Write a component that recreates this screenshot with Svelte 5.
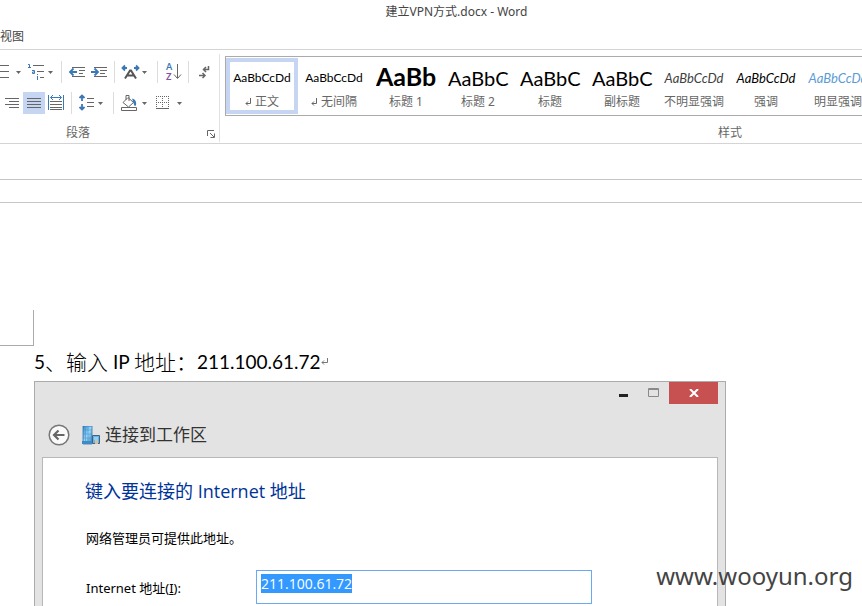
<script>
  import { onMount } from 'svelte';

  const styles = [
    { sample: 'AaBbCcDd', name: '正文', mark: true, kind: 'body', selected: true },
    { sample: 'AaBbCcDd', name: '无间隔', mark: true, kind: 'body' },
    { sample: 'AaBb', name: '标题 1', kind: 'h1' },
    { sample: 'AaBbC', name: '标题 2', kind: 'h2' },
    { sample: 'AaBbC', name: '标题', kind: 'h2' },
    { sample: 'AaBbC', name: '副标题', kind: 'h2' },
    { sample: 'AaBbCcDd', name: '不明显强调', kind: 'subtle' },
    { sample: 'AaBbCcDd', name: '强调', kind: 'em' },
    { sample: 'AaBbCcDd', name: '明显强调', kind: 'intense' }
  ];

  let address = $state('211.100.61.72');
  let field;

  onMount(() => {
    field.focus({ preventScroll: true });
    field.select();
  });
</script>

{#snippet caret(x)}
  <path class="fill" d="M{x} 10h5l-2.5 3z" />
{/snippet}

<div class="app">
  <header class="titlebar">建立VPN方式.docx - Word</header>
  <nav class="tabs"><a href="#view">视图</a></nav>

  <section class="ribbon">
    <div class="group paragraph">
      <div class="tools">
        <div class="row">
          <button aria-label="编号"><svg width="26" height="22" viewBox="0 0 26 22">
            <path class="ink" d="M0 4.5h9M0 10.5h9M0 16.5h9" />{@render caret(16)}
          </svg></button>
          <button aria-label="多级列表"><svg width="30" height="22" viewBox="0 0 30 22">
            <path class="ink" d="M7 4.5h11M11 10.5h7M14 16.5h4" />
            <path class="blue" d="M2 3.5h1.5v3M2 6.5h3M6 9.5h2.500v3h-2v-1.500h2M11.500 13v1M11.500 15v4" />
            {@render caret(22)}
          </svg></button>
          <span class="sep"></span>
          <button aria-label="减少缩进"><svg width="22" height="22" viewBox="0 0 22 22">
            <path class="ink" d="M7 6.5h13M14 9.500h6M14 12.500h4M7 15.500h13" />
            <path class="blue thick" d="M5 11h7M8.500 7.500L5 11l3.500 3.500" />
          </svg></button>
          <button aria-label="增加缩进"><svg width="22" height="22" viewBox="0 0 22 22">
            <path class="ink" d="M7 6.5h13M13 9.500h7M13 12.500h5M7 15.500h13" />
            <path class="blue thick" d="M4 11h7M7.500 7.500L11 11l-3.500 3.500" />
          </svg></button>
          <span class="sep"></span>
          <button aria-label="中文版式"><svg width="34" height="22" viewBox="0 0 34 22">
            <path class="dark" d="M7 17.500l5-8h1l5 8M9.500 14.500h6" />
            <path class="blue thick" d="M5 7h4M7 4.500L4.500 7l2.500 2.500M16 7h4M18 4.500l2.500 2.500-2.500 2.500" />
            {@render caret(24)}
          </svg></button>
          <span class="sep"></span>
          <button aria-label="排序"><svg width="22" height="22" viewBox="0 0 22 22">
            <text x="5" y="9" fill="#3c78b4">A</text>
            <text x="5" y="19" fill="#8352a5">Z</text>
            <path class="ink" d="M16.500 3v14M13 13.500l3.500 4 3.500-4" />
          </svg></button>
          <span class="sep"></span>
          <button aria-label="显示编辑标记"><svg width="26" height="22" viewBox="0 0 26 22">
            <path class="ink heavy" d="M16.500 5v3.500h-5M14 6L11.500 8.500 14 11M7 14.500h6M10.500 12l2.500 2.500-2.500 2.500" />
          </svg></button>
        </div>

        <div class="row">
          <button aria-label="右对齐"><svg width="23" height="22" viewBox="0 0 23 22">
            <path class="ink" d="M5 6.500h14M9 9.500h10M5 12.500h14M9 15.500h10" />
          </svg></button>
          <button class="on" aria-label="两端对齐" aria-pressed="true"><svg width="22" height="22" viewBox="0 0 22 22">
            <path class="ink" d="M4 6.500h14M4 9.500h14M4 12.500h14M4 15.500h14" />
          </svg></button>
          <button aria-label="分散对齐"><svg width="21" height="22" viewBox="0 0 21 22">
            <path class="blue" d="M3.500 3v15M18.500 3v15M5.500 5.500h11M8 3L5.500 5.500 8 8M14 3l2.500 2.500L14 8" />
            <path class="ink" d="M5 9.500h12M5 12.500h12M5 15.500h12M5 17.500h12" />
          </svg></button>
          <span class="sep"></span>
          <button aria-label="行距"><svg width="33" height="22" viewBox="0 0 33 22">
            <path class="blue thick" d="M7 4v5M7 12v5M4.500 6L7 3.500 9.500 6M4.500 15L7 17.500 9.500 15" />
            <path class="ink" d="M12 6.500h7M12 10.500h7M12 14.500h7" />{@render caret(23)}
          </svg></button>
          <span class="sep"></span>
          <button aria-label="底纹"><svg width="35" height="22" viewBox="0 0 35 22">
            <path class="ink" d="M6 10.500l5-5 5.500 5-5 4.500zM9 8V3.500h3V9M4.500 15.500h15v3h-15z" />
            <path fill="#3c78b4" d="M15 6.500q5 1 4 7q-2 1-2-1z" />{@render caret(25)}
          </svg></button>
          <button aria-label="边框"><svg width="34" height="22" viewBox="0 0 34 22">
            <path class="ink dots" d="M4 4.500h13M4 10.500h13M4.500 4v12M10.500 4v12M16.500 4v12" />
            <path class="ink" d="M4 16.500h13" />{@render caret(25)}
          </svg></button>
        </div>
      </div>
      <div class="caption">
        <span>段落</span>
        <button class="launcher" aria-label="段落设置"><svg width="9" height="9" viewBox="0 0 9 9">
          <path class="ink" d="M.5 6V.5H7M3 3l4 4M7.500 3.500v4h-4" />
        </svg></button>
      </div>
    </div>

    <div class="group gallery-group">
      <div class="gallery">
        {#each styles as s}
          <button class="style" class:selected={s.selected}>
            <span class="sample {s.kind}">{s.sample}</span>
            <span class="name">{#if s.mark}<svg width="7" height="8" viewBox="0 0 7 8"><path class="ink" d="M5.500 0v5.500H1M3 3.500L1 5.500l2 2" /></svg>{/if}{s.name}</span>
          </button>
        {/each}
      </div>
      <div class="caption styles-caption">样式</div>
    </div>
  </section>

  <div class="ruler"></div>

  <main class="page">
    <div class="corner"></div>
    <p class="line">5<span class="song">、输入</span> IP <span class="song">地址：</span>211.100.61.72<svg width="8" height="8" viewBox="0 0 8 8"><path d="M6.500 0v4.500H1M3 2.500l-2 2 2 2" fill="none" stroke="#777" /></svg></p>

    <section class="dialog">
      <div class="controls">
        <button class="min" aria-label="最小化"><svg width="10" height="3"><rect width="9" height="3" fill="#222" /></svg></button>
        <button class="max" aria-label="最大化"><svg width="12" height="10" viewBox="0 0 12 10"><path d="M.5 .5h10v8H.5zM0 1.500h11" fill="none" stroke="#8a8a8a" /></svg></button>
        <button class="close" aria-label="关闭"><svg width="10" height="8" viewBox="0 0 10 8"><path d="M1 0l8 8M9 0L1 8" stroke="#fff" stroke-width="2" /></svg></button>
      </div>
      <div class="wizard-head">
        <button aria-label="返回"><svg width="22" height="22" viewBox="0 0 22 22">
          <circle cx="11" cy="11" r="9.800" fill="#fafafa" stroke="#777" stroke-width="1.500" />
          <path d="M6 11h10.500M10.500 6.500L6 11l4.500 4.500" fill="none" stroke="#666" stroke-width="2.200" />
        </svg></button>
        <svg width="19" height="19" viewBox="0 0 19 19">
          <defs><linearGradient id="tower" x1="0" y1="0" x2="1" y2="1"><stop offset="0" stop-color="#3385c8" /><stop offset=".5" stop-color="#9ad8fa" /><stop offset="1" stop-color="#3a82c0" /></linearGradient></defs>
          <path d="M1 0h9v18H1z" fill="url(#tower)" stroke="#3473a8" stroke-width=".8" />
          <path d="M3.500 0v15M6 0v18M1 4h9M1 8h9M1 12h9" stroke="#4a93cc" stroke-width=".6" />
          <path d="M0 15h10v3H0z" fill="#3c8bc7" />
          <path d="M10.500 9.500h7v8h-7z" fill="#6eb2e2" stroke="#46627c" />
          <path d="M12 11h4v3h-4z" fill="#8fd0f5" />
          <path d="M13 14h3v4h-3z" fill="#c9c4ad" />
        </svg>
        <span>连接到工作区</span>
      </div>
      <div class="client">
        <h1>键入要连接的 Internet 地址</h1>
        <p>网络管理员可提供此地址。</p>
        <div class="field">
          <label for="address">Internet 地址(<u>I</u>):</label>
          <input id="address" type="text" bind:value={address} bind:this={field} />
        </div>
      </div>
    </section>
  </main>

  <div class="watermark">www.wooyun.org</div>
</div>

<style>
  :global(body) { margin: 0; background: #fff; }
  .app {
    position: relative;
    display: flex;
    flex-direction: column;
    height: 100vh;
    overflow: hidden;
    color: #444;
    font: 12px/16px "Noto Sans", "Noto Sans CJK SC", sans-serif;
  }
  button { display: block; margin: 0; padding: 0; border: 0; background: none; font: inherit; color: inherit; }
  svg { display: block; flex: none; }
  p, h1 { margin: 0; font-weight: 400; }

  .titlebar { height: 24px; padding-left: 51px; line-height: 24px; text-align: center; flex: none; }
  .tabs { height: 25px; border-bottom: 1px solid #d4d4d4; line-height: 25px; flex: none; }
  .tabs a { color: #444; text-decoration: none; }

  .ribbon { display: flex; height: 93px; border-bottom: 1px solid #d4d4d4; flex: none; }
  .group { display: flex; flex-direction: column; justify-content: space-between; }
  .paragraph { width: 219px; border-right: 1px solid #e1e1e1; margin: 4px 0 1px; flex: none; }
  .tools { display: flex; flex-direction: column; gap: 9px; padding-top: 7px; }
  .row { display: flex; height: 22px; }
  .row > * { flex: none; }
  .on { background: #c5d5f2; }
  .sep { width: 1px; height: 22px; margin: 0 3px 0 5px; background: #dcdcdc; }
  .ink { fill: none; stroke: #666; }
  .heavy { stroke-width: 1.5; }
  .dark { fill: none; stroke: #555; stroke-width: 2; }
  .blue { fill: none; stroke: #3c78b4; }
  .thick { stroke-width: 1.8; }
  .fill { fill: #666; }
  .dots { stroke-dasharray: 1 1; }
  .row text { font: 700 9px Lato, sans-serif; }
  .caption { display: flex; align-items: center; justify-content: space-between; color: #666; height: 18px; }
  .paragraph .caption { padding: 0 3px 0 66px; }
  .launcher { padding-top: 3px; }

  .gallery-group { flex: 1; min-width: 0; margin: 6px 0 1px 5px; }
  .gallery { display: flex; height: 58px; border: 1px solid #ababab; border-right: 0; overflow: hidden; }
  .style {
    display: flex;
    flex-direction: column;
    align-items: center;
    flex: 0 0 72px;
    height: 56px;
    margin-top: 1px;
    box-sizing: border-box;
    border: 4px solid transparent;
  }
  .style.selected { border-color: #c5d5f2; }
  .sample { width: 60px; height: 32px; line-height: 32px; color: #000; font-family: Lato, sans-serif; font-size: 13px; white-space: nowrap; text-align: center; flex: none; }
  .body { font-size: 12px; }
  .h1 { font-size: 25px; line-height: 28px; font-weight: 700; overflow: hidden; }
  .h2 { font-size: 20px; }
  .subtle, .em, .intense { font-style: italic; }
  .subtle { color: #404040; }
  .intense { color: #5b9bd5; }
  .name { display: flex; align-items: center; gap: 3px; color: #666; white-space: nowrap; }
  .styles-caption { padding-left: 493px; }

  .ruler { height: 22px; margin-top: 35px; border: solid #c6c6c6; border-width: 1px 0; flex: none; }

  .page { display: flex; flex-direction: column; flex: 1; min-height: 0; padding-top: 107px; }
  .corner { width: 33px; height: 35px; border: solid #ababab; border-width: 0 1px 1px 0; flex: none; }
  .line { display: flex; align-items: center; height: 32px; padding: 0 0 3px 34px; color: #000; font: 19px/32px Lato, "Noto Sans CJK SC", sans-serif; white-space: pre; flex: none; }
  .song { font-size: 21px; font-weight: 300; }

  .dialog { display: flex; flex-direction: column; flex: 1; min-height: 0; width: 690px; margin-left: 34px; border: 1px solid #ababab; border-bottom: 0; background: #e3e3e3; }
  .controls { display: flex; justify-content: flex-end; height: 22px; padding-right: 7px; flex: none; }
  .controls button { display: flex; align-items: center; justify-content: center; height: 22px; }
  .min { width: 30px; padding-top: 5px; }
  .max { width: 30px; }
  .controls .close { width: 49px; background: #c75050; }
  .wizard-head { display: flex; align-items: center; height: 53px; padding: 9px 0 0 13px; color: #333; font-size: 17px; line-height: 24px; box-sizing: border-box; flex: none; }
  .wizard-head button { margin-right: 12px; }
  .wizard-head span { margin-left: 4px; }
  .client { flex: 1; min-height: 0; margin: 0 7px; padding: 20px 0 0 42px; border: 1px solid #b8b8b8; border-bottom: 0; background: #fff; color: #000; font-size: 13px; line-height: 20px; }
  h1 { color: #003399; font-family: "Open Sans", "Noto Sans CJK SC", sans-serif; font-size: 18px; line-height: 26px; }
  .client p { margin-top: 24px; padding-left: 1px; }
  .field { display: flex; align-items: center; margin-top: 22px; padding-left: 1px; }
  label { width: 170px; padding-top: 2px; flex: none; }
  input { width: 336px; height: 34px; box-sizing: border-box; padding: 0 4px 8px; border: 1px solid #6aaaf0; outline: 0; background: #fff; color: #000; font: 14px/20px "Open Sans", "Noto Sans CJK SC", sans-serif; caret-color: #e08030; }
  input::selection { background: #3399ff; color: #fff; }

  .watermark { position: absolute; right: 9px; bottom: 13px; color: #444; font-size: 24px; line-height: 34px; }
</style>
